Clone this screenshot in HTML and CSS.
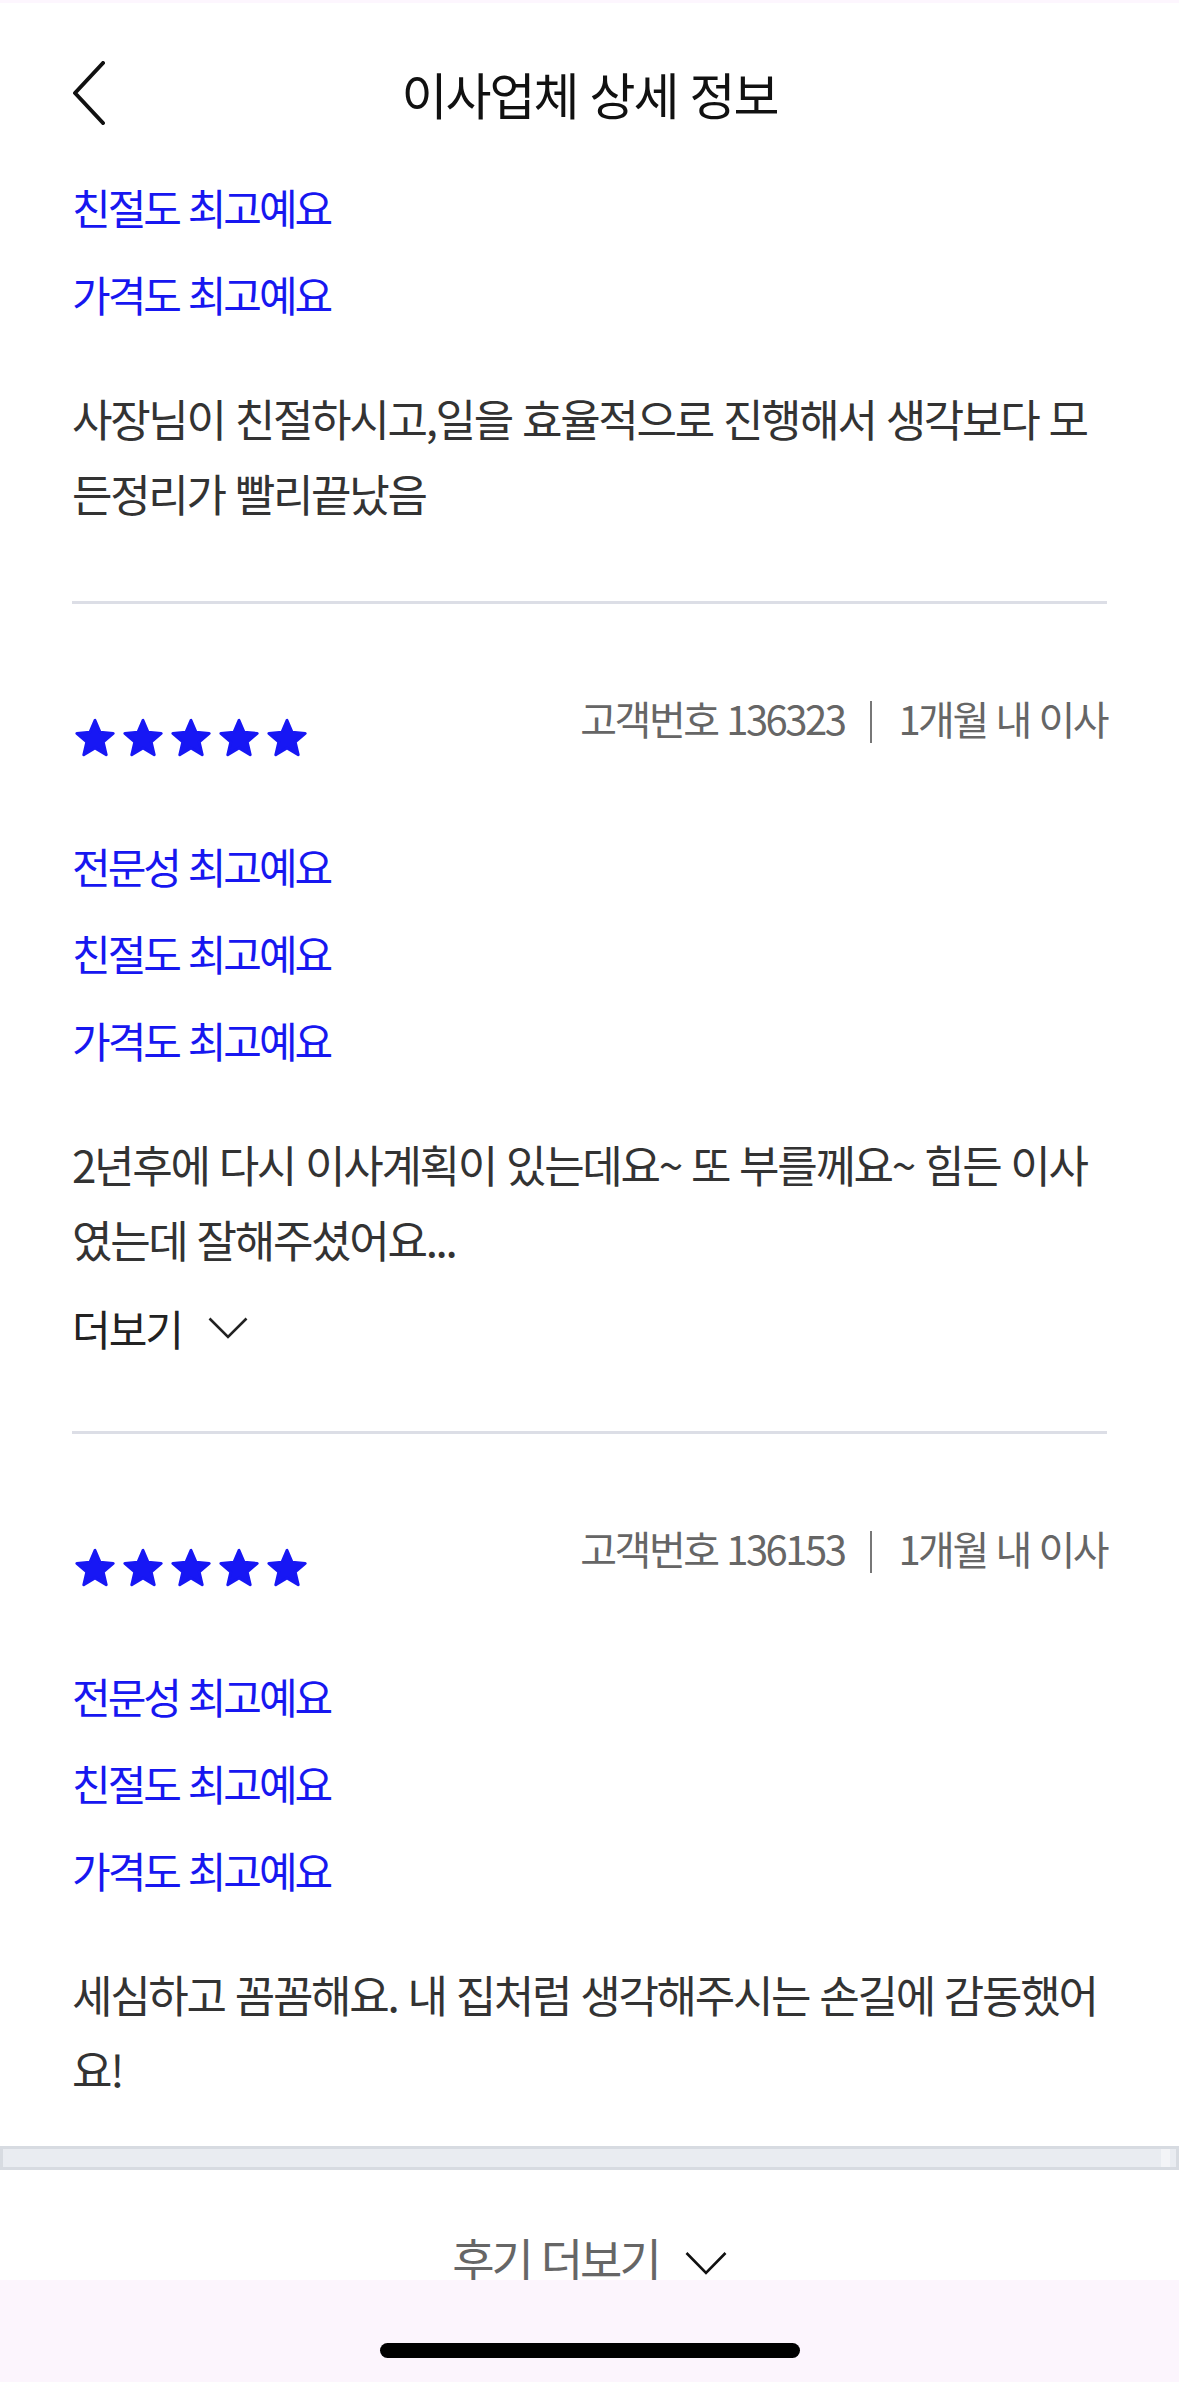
FILE: index.html
```html
<!DOCTYPE html>
<html lang="ko">
<head>
    <meta charset="UTF-8">
    <meta name="viewport" content="width=device-width, initial-scale=1.0">
    <title>이사업체 상세 정보</title>
    <link rel="stylesheet" href="styles.css">
</head>
<body>
    <!-- star shape, reused by every rating -->
    <svg class="defs" width="0" height="0" aria-hidden="true">
        <symbol id="star" viewBox="1 1 22 21">
            <path d="M12 17.27L18.18 21l-1.64-7.03L22 9.24l-7.19-.61L12 2 9.19 8.63 2 9.24l5.46 4.73L5.82 21z"
                  fill="currentColor" stroke="currentColor" stroke-width="1.6" stroke-linejoin="round"/>
        </symbol>
    </svg>

    <div class="screen">
        <div class="status-strip"></div>

        <header class="topbar">
            <button class="back" type="button" aria-label="뒤로">
                <svg width="34" height="64" viewBox="0 0 34 64">
                    <path d="M31 2 L3 32 L31 62" fill="none" stroke="#111" stroke-width="4" stroke-linecap="round" stroke-linejoin="round"/>
                </svg>
            </button>
            <h1 class="title">이사업체 상세 정보</h1>
        </header>

        <main class="reviews">
            <!-- first review is scrolled up under the header -->
            <section class="review">
                <ul class="tags">
                    <li>친절도 최고예요</li>
                    <li>가격도 최고예요</li>
                </ul>
                <p class="review-text">사장님이 친절하시고,일을 효율적으로 진행해서 생각보다 모든정리가 빨리끝났음</p>
            </section>

            <section class="review">
                <div class="review-head">
                    <div class="stars">
                        <svg><use href="#star"/></svg>
                        <svg><use href="#star"/></svg>
                        <svg><use href="#star"/></svg>
                        <svg><use href="#star"/></svg>
                        <svg><use href="#star"/></svg>
                    </div>
                    <div class="meta">
                        <span>고객번호 136323</span>
                        <i class="sep"></i>
                        <span>1개월 내 이사</span>
                    </div>
                </div>
                <ul class="tags">
                    <li>전문성 최고예요</li>
                    <li>친절도 최고예요</li>
                    <li>가격도 최고예요</li>
                </ul>
                <p class="review-text">2년후에 다시 이사계획이 있는데요~ 또 부를께요~ 힘든 이사였는데 잘해주셨어요...</p>
                <button class="read-more" type="button">
                    더보기
                    <svg width="40" height="22" viewBox="0 0 40 22">
                        <path d="M1.5 1.5 L20 20 L38.5 1.5" fill="none" stroke="#222" stroke-width="2.6"/>
                    </svg>
                </button>
            </section>

            <section class="review last">
                <div class="review-head">
                    <div class="stars">
                        <svg><use href="#star"/></svg>
                        <svg><use href="#star"/></svg>
                        <svg><use href="#star"/></svg>
                        <svg><use href="#star"/></svg>
                        <svg><use href="#star"/></svg>
                    </div>
                    <div class="meta">
                        <span>고객번호 136153</span>
                        <i class="sep"></i>
                        <span>1개월 내 이사</span>
                    </div>
                </div>
                <ul class="tags">
                    <li>전문성 최고예요</li>
                    <li>친절도 최고예요</li>
                    <li>가격도 최고예요</li>
                </ul>
                <p class="review-text">세심하고 꼼꼼해요. 내 집처럼 생각해주시는 손길에 감동했어요!</p>
            </section>
        </main>

        <div class="scroll-track"></div>

        <button class="more-reviews" type="button">
            후기 더보기
            <svg width="42" height="24" viewBox="0 0 42 24">
                <path d="M1.5 2 L21 22 L40.5 2" fill="none" stroke="#111" stroke-width="2.6"/>
            </svg>
        </button>

        <!-- iOS home indicator -->
        <div class="home-area">
            <span class="home-bar"></span>
        </div>
    </div>
</body>
</html>
```

FILE: styles.css
```css
body {
    margin: 0;
    background: #fff;
    font-family: "Noto Sans CJK KR", "Noto Sans", sans-serif;
    color: #333;
}
.defs {
    position: absolute;
}
.screen {
    position: relative;
    height: 2382px;
    overflow: hidden;
    display: flex;
    flex-direction: column;
}
.status-strip {
    height: 3px;
    background: #fdf6fe;
}

/* Header */
.topbar {
    display: grid;
    grid-template-columns: 1fr auto 1fr;
    align-items: center;
    padding: 58px 72px 52px;
}
.back {
    justify-self: start;
    display: flex;
    padding: 0;
    border: none;
    background: none;
    cursor: pointer;
}
.title {
    margin: 0;
    font-size: 50px;
    line-height: 60px;
    font-weight: 400;
    letter-spacing: -2px;
    color: #111;
}

/* Reviews */
.reviews {
    padding: 0 72px;
}
.review {
    padding: 84px 0 70px;
    border-bottom: 3px solid #dcdee6;
}
.review:first-child {
    padding-top: 0;
}
.review.last {
    padding-bottom: 39px;
    border-bottom: none;
}
.review-head {
    display: flex;
    justify-content: space-between;
    align-items: flex-start;
}
.stars {
    display: flex;
    gap: 8px;
    margin-top: 30px;
    margin-left: 3px;
    color: #1717f4;
}
.stars svg {
    width: 40px;
    height: 39px;
}
.meta {
    display: flex;
    align-items: center;
    font-size: 40px;
    line-height: 60px;
    letter-spacing: -2.5px;
    color: #666;
}
.sep {
    width: 2px;
    height: 42px;
    margin: 8px 26px 0;
    background: #777;
}
.tags {
    list-style: none;
    margin: 79px 0 0;
    padding: 0;
    display: flex;
    flex-direction: column;
    gap: 27px;
    font-size: 42px;
    line-height: 60px;
    letter-spacing: -3px;
    color: #1717f0;
}
.review:first-child .tags {
    margin-top: 0;
}
.review-text {
    margin: 57px 0 0;
    font-size: 44px;
    line-height: 75px;
    letter-spacing: -2.3px;
    color: #333;
}
.read-more {
    display: flex;
    align-items: center;
    gap: 26px;
    margin: 21px 0 3px;
    padding: 0;
    border: none;
    background: none;
    font-family: inherit;
    font-size: 42px;
    line-height: 60px;
    letter-spacing: -2px;
    color: #222;
    cursor: pointer;
}

/* Bottom */
.scroll-track {
    position: relative;
    height: 18px;
    border: 3px solid #d7dbe1;
    background: #e9ecf1;
}
.scroll-track::after {
    content: "";
    position: absolute;
    top: 0;
    bottom: 0;
    right: 6px;
    width: 9px;
    background: #f3f4f7;
}
.more-reviews {
    align-self: center;
    display: flex;
    align-items: center;
    gap: 26px;
    margin-top: 57px;
    padding: 0;
    border: none;
    background: none;
    font-family: inherit;
    font-size: 46px;
    line-height: 60px;
    letter-spacing: -3px;
    color: #666;
    cursor: pointer;
}
.more-reviews svg {
    margin-top: 12px;
}
.home-area {
    position: absolute;
    left: 0;
    right: 0;
    bottom: 0;
    height: 102px;
    background: #fcf5fd;
    display: flex;
    justify-content: center;
}
.home-bar {
    width: 420px;
    height: 15px;
    margin-top: 63px;
    border-radius: 8px;
    background: #000;
}
```
